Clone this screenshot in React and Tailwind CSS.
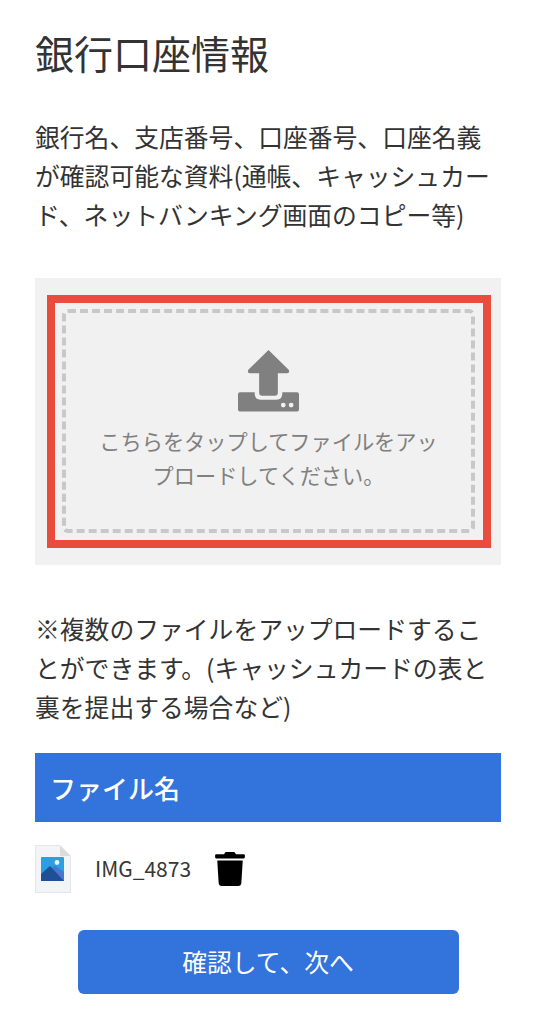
import React from 'react';
import { FaTrash } from 'react-icons/fa';

const fontStack = { fontFamily: '"Noto Sans CJK JP", "Noto Sans", sans-serif' };

const UploadIcon = () => (
  <svg width="63" height="64" viewBox="0 0 64 64" className="block">
    <path d="M32 0.5 L52.5 20.5 Q54 23.5 51 24 L41.5 24 L41.5 44 Q41.5 47 38.5 47 L25.5 47 Q22.5 47 22.5 44 L22.5 24 L13 24 Q10 23.5 11.5 20.5 Z" fill="#808080" />
    <path d="M3 43.5 H18 V45 Q18 51 24 51 H40 Q46 51 46 45 V43.5 H61 Q63 43.5 63 45.5 V61 Q63 63 61 63 H3 Q1 63 1 61 V45.5 Q1 43.5 3 43.5 Z" fill="#808080" />
    <circle cx="47" cy="56.5" r="2.4" fill="#f1f1f1" />
    <circle cx="55" cy="56.5" r="2.4" fill="#f1f1f1" />
  </svg>
);

const ImageFileIcon = () => (
  <svg width="36" height="48" viewBox="0 0 36 48" className="block shrink-0">
    <path d="M0.5 0.5 H25 L35.5 11 V47.5 H0.5 Z" fill="#f3f4f7" stroke="#e6e6e6" />
    <path d="M25 0.5 V11 H35.5 Z" fill="#dcdcdc" />
    <rect x="6" y="12" width="23" height="24" rx="1" fill="#2a9fe3" />
    <circle cx="22" cy="17.5" r="2.4" fill="#e8f4fc" />
    <path d="M15 24 L20 21 L29 27 V36 H24 Z" fill="#4a76cf" />
    <path d="M6 36 V29 L15 21 L29 36 Z" fill="#1f4f96" />
  </svg>
);

export default function App() {
  return (
    <div className="w-[539px] h-[1024px] bg-white pl-[35px] pr-[38px] overflow-hidden text-[#333333]" style={fontStack}>
      <h1 className="pt-[26px] text-[39px] leading-[52px] font-normal">銀行口座情報</h1>

      <p className="mt-[39px] text-[24.8px] leading-[39px]">
        銀行名、支店番号、口座番号、口座名義が確認可能な資料(通帳、キャッシュカード、ネットバンキング画面のコピー等)
      </p>

      <div className="mt-[44px] h-[287px] bg-[#f1f1f1] pt-[17px] pl-[12px] pr-[10px]">
        <div className="h-[253px] border-[8px] border-[#e94b3c] pl-[7px] pr-[8px] pt-[6px] pb-[7px]">
          <div className="h-full border-[4px] border-dashed border-[#c8c8c8] rounded-[6px] flex flex-col items-center pt-[36px] px-[28px]">
            <UploadIcon />
            <p className="mt-[11px] text-center text-[21.2px] leading-[34px] text-[#808080]">
              こちらをタップしてファイルをアップロードしてください。
            </p>
          </div>
        </div>
      </div>

      <p className="mt-[44px] text-[24.8px] leading-[39px]">
        ※複数のファイルをアップロードすることができます。(キャッシュカードの表と裏を提出する場合など)
      </p>

      <div className="mt-[27px] h-[69px] bg-[#3273dc] flex items-center px-[15px] text-white text-[26px] font-medium">
        ファイル名
      </div>

      <div className="mt-[23px] flex items-center h-[48px]">
        <ImageFileIcon />
        <span className="ml-[24px] text-[21px] text-[#363636]">IMG_4873</span>
        <FaTrash className="ml-[22px] text-black" size={34} />
      </div>

      <div className="mt-[37px] flex justify-center">
        <button className="w-[381px] h-[64px] bg-[#3273dc] rounded-[6px] text-white text-[24.8px]">
          確認して、次へ
        </button>
      </div>
    </div>
  );
}
